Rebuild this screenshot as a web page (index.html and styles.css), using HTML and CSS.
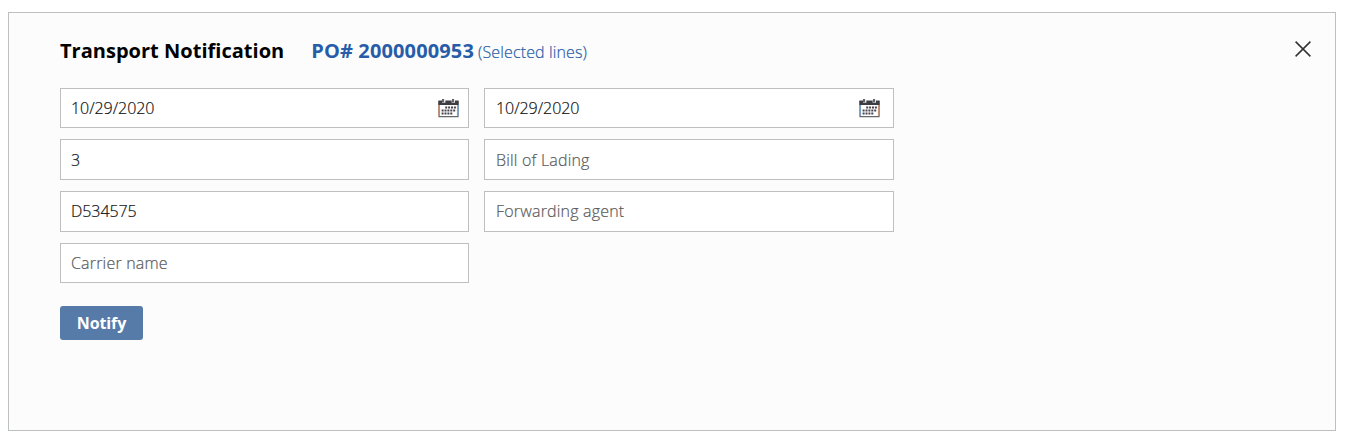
FILE: index.html
```html
<!DOCTYPE html>
<html lang="en">
<head>
<meta charset="utf-8">
<title>Transport Notification</title>
<link rel="stylesheet" href="styles.css">
</head>
<body>
<svg width="0" height="0" class="defs">
  <symbol id="calendar" viewBox="0 0 21 19">
    <path d="M1 2v15.7h19V2" fill="#fff" stroke="#65676d" stroke-width="1.2"/>
    <path d="M.4 1.5h20.2V6H.4z" fill="#3c3d42"/>
    <path d="M4 0h3.4v3.8H4zM13.6 0H17v3.8h-3.4z" fill="#e8e8ea"/>
    <path d="M5 0v3.2M15 0v3.2" stroke="#35363b" stroke-width="1.5"/>
    <path d="M.4 6v11M19.4 6v11" stroke="#c98d68" stroke-width=".8"/>
    <path d="M1.6 6v11M20.6 6v11" stroke="#6c9cc9" stroke-width=".8"/>
    <path d="M7.2 8.5h11M3.6 11.5h14.4M3.6 14.5h11" stroke="#46434d" stroke-width="1.8" stroke-dasharray="2 .9"/>
  </symbol>
</svg>
<section class="panel">
  <header class="header">
    <h1 class="title">Transport Notification</h1>
    <div class="order"><span class="order-number">PO# 2000000953</span><span class="order-scope">(Selected lines)</span></div>
    <svg class="close" viewBox="0 0 16 16"><path d="M.6.6l14.8 14.8M15.4.6L.6 15.4" stroke="#333" stroke-width="1.5"/></svg>
  </header>
  <div class="form">
    <div class="field">10/29/2020<svg class="calendar"><use href="#calendar"/></svg></div>
    <div class="field right">10/29/2020<svg class="calendar"><use href="#calendar"/></svg></div>
    <div class="field">3</div>
    <div class="field right placeholder">Bill of Lading</div>
    <div class="field raised">D534575</div>
    <div class="field right placeholder raised">Forwarding agent</div>
    <div class="field placeholder">Carrier name</div>
  </div>
  <button class="notify">Notify</button>
</section>
</body>
</html>
```
FILE: styles.css
```css
* { box-sizing: border-box; }
body {
  margin: 0;
  padding: 12px 11px 0 8px;
  background: #fff;
  font-family: "Open Sans", "Noto Sans", sans-serif;
  font-size: 16px;
  color: #000;
}
.defs { display: block; }
.panel {
  height: 419px;
  padding: 22px 24px 0 51px;
  border: 1px solid #bcc0c0;
  background: #fcfcfc;
}
.header {
  display: flex;
  align-items: center;
  height: 32px;
}
.title {
  margin: 0;
  font-size: 20px;
  font-weight: 700;
  line-height: 32px;
  letter-spacing: .02px;
  white-space: nowrap;
}
.order {
  display: flex;
  align-items: baseline;
  gap: 4px;
  margin-left: 27px;
  line-height: 32px;
  color: #285ca8;
  white-space: nowrap;
}
.order-number { font-size: 20px; font-weight: 700; letter-spacing: .13px; }
.order-scope {
  font-size: 16px;
  font-weight: 300;
  letter-spacing: .13px;
  -webkit-text-stroke: .2px currentColor;
}
.close {
  width: 16px;
  height: 16px;
  margin-left: auto;
  margin-bottom: 5px;
}
.form {
  display: grid;
  grid-template-columns: 409px 410px;
  grid-template-rows: 40px 41px 41px 40px;
  gap: 11px 15px;
  margin-top: 21px;
}
.field {
  display: flex;
  align-items: center;
  padding: 0 9px 0 10px;
  border: 1px solid #bfbfbf;
  background: #fff;
  color: #111;
  font-weight: 300;
  letter-spacing: -.06px;
  line-height: 22px;
  -webkit-text-stroke: .2px currentColor;
}
.right { padding: 0 13px 0 11px; }
.raised { padding-bottom: 1px; }
.placeholder { color: #5a5a5a; letter-spacing: .19px; }
.calendar {
  width: 21px;
  height: 19px;
  margin-left: auto;
}
.notify {
  display: block;
  width: 83px;
  height: 34px;
  margin-top: 23px;
  padding: 0;
  border: 0;
  border-radius: 3px;
  background: #567ba8;
  color: #fff;
  font: 700 16px/34px "Open Sans", "Noto Sans", sans-serif;
  letter-spacing: -.1px;
}
```
